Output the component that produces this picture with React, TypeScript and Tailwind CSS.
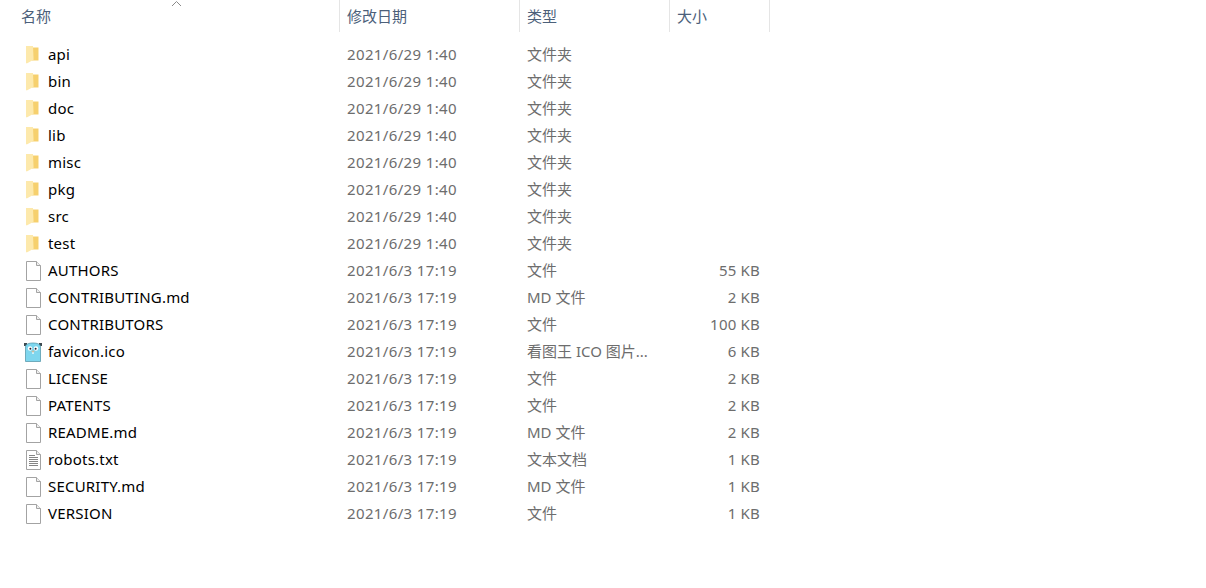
const FONT = "font-['Noto_Sans','Noto_Sans_CJK_SC',sans-serif]"

type Kind = 'folder' | 'file' | 'gopher' | 'text'

interface Row {
  name: string
  date: string
  type: string
  size?: string
  kind: Kind
}

const D1 = '2021/6/29 1:40'
const D2 = '2021/6/3 17:19'

const ROWS: Row[] = [
  { name: 'api', date: D1, type: '文件夹', kind: 'folder' },
  { name: 'bin', date: D1, type: '文件夹', kind: 'folder' },
  { name: 'doc', date: D1, type: '文件夹', kind: 'folder' },
  { name: 'lib', date: D1, type: '文件夹', kind: 'folder' },
  { name: 'misc', date: D1, type: '文件夹', kind: 'folder' },
  { name: 'pkg', date: D1, type: '文件夹', kind: 'folder' },
  { name: 'src', date: D1, type: '文件夹', kind: 'folder' },
  { name: 'test', date: D1, type: '文件夹', kind: 'folder' },
  { name: 'AUTHORS', date: D2, type: '文件', size: '55 KB', kind: 'file' },
  { name: 'CONTRIBUTING.md', date: D2, type: 'MD 文件', size: '2 KB', kind: 'file' },
  { name: 'CONTRIBUTORS', date: D2, type: '文件', size: '100 KB', kind: 'file' },
  { name: 'favicon.ico', date: D2, type: '看图王 ICO 图片...', size: '6 KB', kind: 'gopher' },
  { name: 'LICENSE', date: D2, type: '文件', size: '2 KB', kind: 'file' },
  { name: 'PATENTS', date: D2, type: '文件', size: '2 KB', kind: 'file' },
  { name: 'README.md', date: D2, type: 'MD 文件', size: '2 KB', kind: 'file' },
  { name: 'robots.txt', date: D2, type: '文本文档', size: '1 KB', kind: 'text' },
  { name: 'SECURITY.md', date: D2, type: 'MD 文件', size: '1 KB', kind: 'file' },
  { name: 'VERSION', date: D2, type: '文件', size: '1 KB', kind: 'file' },
]

function RowIcon({ kind }: { kind: Kind }) {
  if (kind === 'folder') {
    return (
      <svg width="20" height="20" viewBox="0 0 20 20">
        <path d="M9 2.5h6.5v13h-6.5z" fill="#f6d06e" />
        <path d="M3 1h7l.6 13.8L3.8 18.5 3 18z" fill="#fde9ac" />
      </svg>
    )
  }
  if (kind === 'gopher') {
    return (
      <svg width="20" height="20" viewBox="0 0 20 20">
        <rect x="1" y="1" width="3" height="3" fill="#3d4a50" />
        <rect x="16" y="1" width="3" height="3" fill="#3d4a50" />
        <path d="M2.5 5c0-3 3.5-4 7.5-4s7.5 1 7.5 4v14.5h-15z" fill="#7ed6ee" stroke="#4d8fa3" strokeWidth="0.7" />
        <circle cx="7" cy="6.5" r="2.2" fill="#fff" />
        <circle cx="13" cy="6.5" r="2.2" fill="#fff" />
        <circle cx="7.4" cy="6.8" r="1" fill="#223" />
        <circle cx="12.6" cy="6.8" r="1" fill="#223" />
        <ellipse cx="10" cy="9.6" rx="1.5" ry="1" fill="#cdbb9f" />
        <rect x="9.2" y="10.4" width="1.6" height="1.4" fill="#fff" />
      </svg>
    )
  }
  return (
    <svg width="20" height="20" viewBox="0 0 20 20">
      <path d="M3.5 0.5h10l4 4v15h-14z" fill="#fff" stroke="#a3a3a3" />
      <path d="M13.5 0.5v4h4" fill="#efefef" stroke="#a3a3a3" />
      {kind === 'text' && (
        <path d="M6 5.5h6M6 7.5h9M6 9.5h9M6 11.5h9M6 13.5h9M6 15.5h9" stroke="#858585" fill="none" />
      )}
    </svg>
  )
}

export default function App() {
  return (
    <div className={`relative h-[588px] w-[1206px] overflow-hidden bg-white text-[15px] ${FONT}`}>
      {/* Sort arrow */}
      <svg className="absolute left-[171px] top-0" width="11" height="7" viewBox="0 0 11 7">
        <path d="M1 6l4.5-4.5L10 6" fill="none" stroke="#8a8a8a" />
      </svg>

      {/* Header */}
      <div className="flex h-8 w-[770px] text-[#4c607a]">
        <div className="flex w-[340px] items-center border-r border-[#e5e5e5] pl-[21px]">名称</div>
        <div className="flex w-[180px] items-center border-r border-[#e5e5e5] pl-[7px]">修改日期</div>
        <div className="flex w-[150px] items-center border-r border-[#e5e5e5] pl-[7px]">类型</div>
        <div className="flex w-[100px] items-center border-r border-[#e5e5e5] pl-[7px]">大小</div>
      </div>

      {/* Rows */}
      <div className="mt-[9px] w-[770px]">
        {ROWS.map((row) => (
          <div key={row.name} className="flex h-[27px] items-center text-[#6d6d6d]">
            <div className="flex w-[340px] items-center pl-[23px] text-black">
              <span className="mr-[5px] flex h-5 w-5 items-center justify-center">
                <RowIcon kind={row.kind} />
              </span>
              <span className="pb-px tracking-[0.2px]">{row.name}</span>
            </div>
            <div className="w-[180px] pb-px pl-[7px] tracking-[0.36px]">{row.date}</div>
            <div className="w-[150px] pb-px pl-[7px]">{row.type}</div>
            <div className="w-[90px] pb-px text-right tracking-[0.2px]">{row.size}</div>
          </div>
        ))}
      </div>
    </div>
  )
}
